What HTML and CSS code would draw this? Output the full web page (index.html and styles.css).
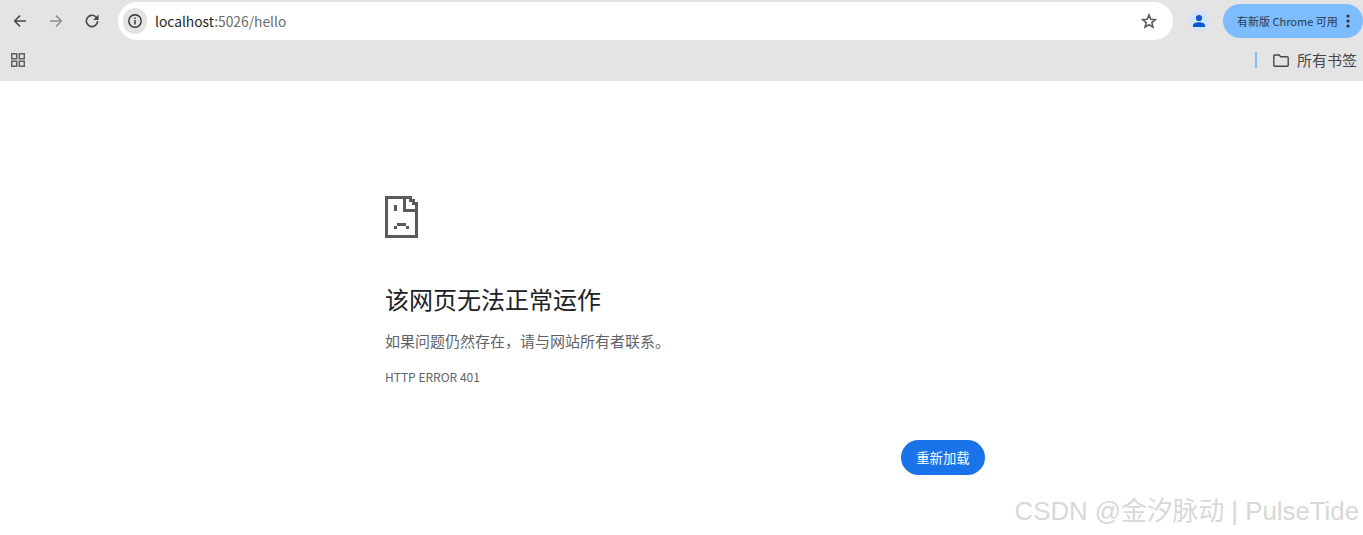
FILE: index.html
```html
<!DOCTYPE html>
<html lang="zh-CN">
<head>
<meta charset="UTF-8">
<meta name="viewport" content="width=device-width, initial-scale=1.0">
<title>localhost:5026/hello</title>
<link rel="stylesheet" href="styles.css">
</head>
<body>

<!-- Browser toolbar -->
<header class="browser-bar">
  <div class="toolbar">
    <button class="tool-btn">
      <svg width="16" height="16" viewBox="0 0 16 16"><path d="M14 8H3M8 2.6 2.6 8 8 13.4" fill="none" stroke="#474747" stroke-width="1.5"/></svg>
    </button>
    <button class="tool-btn">
      <svg width="16" height="16" viewBox="0 0 16 16"><path d="M2 8h11M8 2.6 13.4 8 8 13.4" fill="none" stroke="#8f8f8f" stroke-width="1.5"/></svg>
    </button>
    <button class="tool-btn">
      <svg width="18" height="18" viewBox="0 0 16 16"><path d="M13 8a5 5 0 1 1-1.500-3.600L13 6" fill="none" stroke="#474747" stroke-width="1.400"/><path d="M13.800 2.200v4.800H9z" fill="#474747"/></svg>
    </button>
    <div class="omnibox">
      <span class="site-chip">
        <svg width="16" height="16" viewBox="0 0 16 16"><circle cx="8" cy="8" r="6.200" fill="none" stroke="#333" stroke-width="1.400"/><path d="M7.300 7h1.400v4.400H7.300zM7.300 4.500h1.400v1.400H7.300z" fill="#333"/></svg>
      </span>
      <span class="url">localhost<span class="url-path">:5026/hello</span></span>
      <svg class="star" width="16" height="16" viewBox="0 0 18 18"><path d="M9 2.200 11 7l5.200.4-4 3.400 1.200 5.100L9 13.200l-4.400 2.700 1.200-5.100-4-3.400L7 7z" fill="none" stroke="#5a5a5a" stroke-width="1.800"/></svg>
    </div>
    <span class="avatar">
      <svg width="14" height="14" viewBox="0 0 14 14"><circle cx="7" cy="4" r="3.100" fill="#0b57d0"/><path d="M1 13v-1.600C1 9.400 4 8.200 7 8.200s6 1.200 6 3.200V13z" fill="#0b57d0"/></svg>
    </span>
    <div class="update-pill">
      <span>有新版 Chrome 可用</span>
      <svg width="4" height="14" viewBox="0 0 4 14"><circle cx="2" cy="2" r="1.600" fill="#333"/><circle cx="2" cy="7" r="1.600" fill="#333"/><circle cx="2" cy="12" r="1.600" fill="#333"/></svg>
    </div>
  </div>
  <div class="bookmarks">
    <svg width="14" height="14" viewBox="0 0 14 14"><path d="M.7.7h5v5h-5zM8.300.7h5v5h-5zM.7 8.300h5v5h-5zM8.300 8.300h5v5h-5z" fill="none" stroke="#5f5f5f" stroke-width="1.500"/></svg>
    <span class="bookmarks-sep"></span>
    <svg width="16" height="13" viewBox="0 0 16 13"><path d="M.8 2a1 1 0 0 1 1-1h4.400l1.500 1.700h6.500a1 1 0 0 1 1 1v7.500a1 1 0 0 1-1 1H1.800a1 1 0 0 1-1-1z" fill="none" stroke="#474747" stroke-width="1.400"/></svg>
    <span class="bookmarks-label">所有书签</span>
  </div>
</header>

<!-- Error page -->
<main class="error-page">
  <svg class="error-icon" width="33" height="42" viewBox="0 0 33 42" shape-rendering="crispEdges">
    <path d="M0 0h27v3h3v3h3v36H0zM3 3v36h27V16H18V3zM21 3v10h9V9h-3V6h-3V3z" fill="#5a5a5a" fill-rule="evenodd"/>
    <path d="M9 9h3v6H9zM12 27h9v3h-9zM9 30h3v3H9zM21 30h3v3h-3z" fill="#5a5a5a"/>
  </svg>
  <h1 class="error-title">该网页无法正常运作</h1>
  <p class="error-desc">如果问题仍然存在，请与网站所有者联系。</p>
  <p class="error-code">HTTP ERROR 401</p>
  <div class="error-actions">
    <button class="reload-btn">重新加载</button>
  </div>
</main>

<div class="watermark">CSDN @金汐脉动 | PulseTide</div>

</body>
</html>
```

FILE: styles.css
```css
/* Page */
html, body {
  height: 100%;
}

body {
  margin: 0;
  background-color: #fff;
  font-family: "Noto Sans CJK SC", "Noto Sans", sans-serif;
  color: #333;
  overflow: hidden;
  position: relative;
}

/* Browser toolbar */
.browser-bar {
  height: 81px;
  background-color: #e4e4e4;
}

.toolbar {
  display: flex;
  align-items: center;
  height: 42px;
}

.tool-btn {
  display: flex;
  align-items: center;
  justify-content: center;
  width: 36px;
  height: 36px;
  padding: 0;
  border: none;
  background: none;
  flex: none;
}

.tool-btn:first-child {
  margin-left: 2px;
}

.omnibox {
  display: flex;
  align-items: center;
  flex: none;
  width: 1055px;
  height: 38px;
  margin-left: 8px;
  padding: 0 16px 0 5px;
  box-sizing: border-box;
  background-color: #fff;
  border-radius: 19px;
}

.site-chip {
  display: flex;
  align-items: center;
  justify-content: center;
  width: 24px;
  height: 26px;
  border-radius: 13px;
  background-color: #e3e3e3;
}

.url {
  margin-left: 8px;
  font-size: 13.8px;
  color: #1f1f1f;
}

.url-path {
  color: #6b6b6b;
}

.star {
  margin-left: auto;
}

.avatar {
  display: flex;
  align-items: center;
  justify-content: center;
  flex: none;
  width: 20px;
  height: 20px;
  margin-left: 16px;
  border-radius: 50%;
  background-color: #d3e3fd;
}

.update-pill {
  display: flex;
  align-items: center;
  justify-content: space-between;
  flex: none;
  width: 140px;
  height: 34px;
  margin-left: 14px;
  padding: 0 13px 0 14px;
  box-sizing: border-box;
  background-color: #7cbcff;
  border-radius: 17px;
  font-size: 11px;
  color: #2b3a4a;
}

/* Bookmarks row */
.bookmarks {
  display: flex;
  align-items: center;
  height: 36px;
  padding: 0 6px 0 11px;
}

.bookmarks-sep {
  width: 2px;
  height: 16px;
  margin-left: auto;
  background-color: #7cbcff;
}

.bookmarks > svg:nth-of-type(2) {
  margin-left: 16px;
}

.bookmarks-label {
  margin: 0 0 2px 8px;
  font-size: 15px;
  color: #474747;
}

/* Error page */
.error-page {
  width: 600px;
  margin-left: 385px;
  padding-top: 115px;
}

.error-icon {
  display: block;
}

.error-title {
  margin: 44px 0 0;
  font-size: 24px;
  font-weight: 400;
  line-height: 34px;
  color: #202124;
}

.error-desc {
  margin: 14px 0 0;
  font-size: 15px;
  line-height: 22px;
  color: #5f6368;
}

.error-code {
  margin: 16px 0 0;
  font-size: 12px;
  line-height: 18px;
  color: #5f6368;
}

.error-actions {
  display: flex;
  justify-content: flex-end;
  margin-top: 54px;
}

.reload-btn {
  height: 35px;
  padding: 0 15.500px;
  border: none;
  border-radius: 18px;
  background-color: #1a73e8;
  color: #fff;
  font-family: inherit;
  font-size: 13.3px;
}

/* Watermark over the page */
.watermark {
  position: absolute;
  right: 4px;
  bottom: 5px;
  font-family: "Liberation Sans", "Noto Sans CJK SC", sans-serif;
  font-size: 25.8px;
  line-height: 38px;
  white-space: nowrap;
  color: #d8d8d8;
}
```
